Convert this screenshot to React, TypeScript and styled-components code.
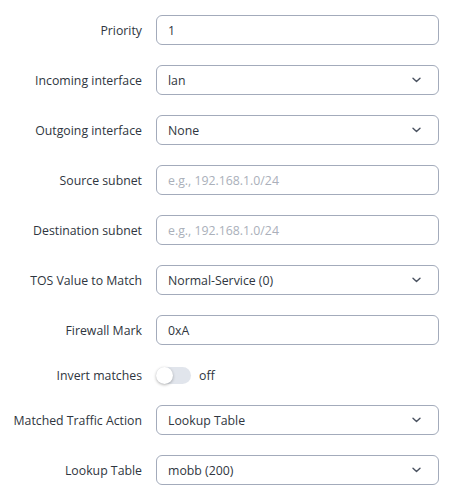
import styled, { createGlobalStyle } from "styled-components";

const GlobalStyle = createGlobalStyle`
  body {
    margin: 0;
    background: #ffffff;
    font-family: "Open Sans", "Noto Sans", sans-serif;
    color: #2f3640;
  }
`;

type Field =
  | { kind: "input"; label: string; value?: string; placeholder?: string }
  | { kind: "select"; label: string; value: string }
  | { kind: "toggle"; label: string; value: string };

const fields: Field[] = [
  { kind: "input", label: "Priority", value: "1" },
  { kind: "select", label: "Incoming interface", value: "lan" },
  { kind: "select", label: "Outgoing interface", value: "None" },
  { kind: "input", label: "Source subnet", placeholder: "e.g., 192.168.1.0/24" },
  { kind: "input", label: "Destination subnet", placeholder: "e.g., 192.168.1.0/24" },
  { kind: "select", label: "TOS Value to Match", value: "Normal-Service (0)" },
  { kind: "input", label: "Firewall Mark", value: "0xA" },
  { kind: "toggle", label: "Invert matches", value: "off" },
  { kind: "select", label: "Matched Traffic Action", value: "Lookup Table" },
  { kind: "select", label: "Lookup Table", value: "mobb (200)" },
];

function Chevron() {
  return (
    <svg width="9" height="6" viewBox="0 0 9 6" fill="none">
      <path d="M1 1.2l3.5 3.4 3.5-3.4" stroke="#4a5260" strokeWidth="1.4" strokeLinecap="round" strokeLinejoin="round" />
    </svg>
  );
}

export default function App() {
  return (
    <>
      <GlobalStyle />
      <Form>
        {fields.map((f) => (
          <Row key={f.label} $toggle={f.kind === "toggle"}>
            <Label>{f.label}</Label>
            {f.kind === "input" && (
              <Box>
                {f.value ? <Value>{f.value}</Value> : <Placeholder>{f.placeholder}</Placeholder>}
              </Box>
            )}
            {f.kind === "select" && (
              <Box>
                <Value>{f.value}</Value>
                <Chevron />
              </Box>
            )}
            {f.kind === "toggle" && (
              <ToggleWrap>
                <Track>
                  <Knob />
                </Track>
                <Value>{f.value}</Value>
              </ToggleWrap>
            )}
          </Row>
        ))}
      </Form>
    </>
  );
}

const Form = styled.div`
  display: flex;
  flex-direction: column;
  gap: 20px;
  padding-top: 15px;
  width: 439px;
`;

const Row = styled.div<{ $toggle?: boolean }>`
  display: grid;
  grid-template-columns: 142px 283px;
  column-gap: 14px;
  align-items: center;
  height: ${(p) => (p.$toggle ? "20px" : "30px")};
`;

const Label = styled.div`
  text-align: right;
  font-size: 12.3px;
  color: #2f3640;
  white-space: nowrap;
`;

const Box = styled.div`
  box-sizing: border-box;
  height: 30px;
  border: 1px solid #a3abbb;
  border-radius: 6px;
  display: flex;
  align-items: center;
  justify-content: space-between;
  padding: 0 17px 0 11px;
  background: #fff;
`;

const Value = styled.span`
  font-size: 12.3px;
  color: #2f3640;
`;

const Placeholder = styled.span`
  font-size: 12.3px;
  color: #aab0ba;
`;

const ToggleWrap = styled.div`
  display: flex;
  align-items: center;
  gap: 8px;
`;

const Track = styled.div`
  position: relative;
  width: 35px;
  height: 17px;
  border-radius: 9px;
  background: #e1e5ec;
`;

const Knob = styled.div`
  position: absolute;
  left: 0;
  top: 0;
  width: 17px;
  height: 17px;
  border-radius: 50%;
  background: #fff;
  box-shadow: 0 1px 3px rgba(0, 0, 0, 0.3);
`;
